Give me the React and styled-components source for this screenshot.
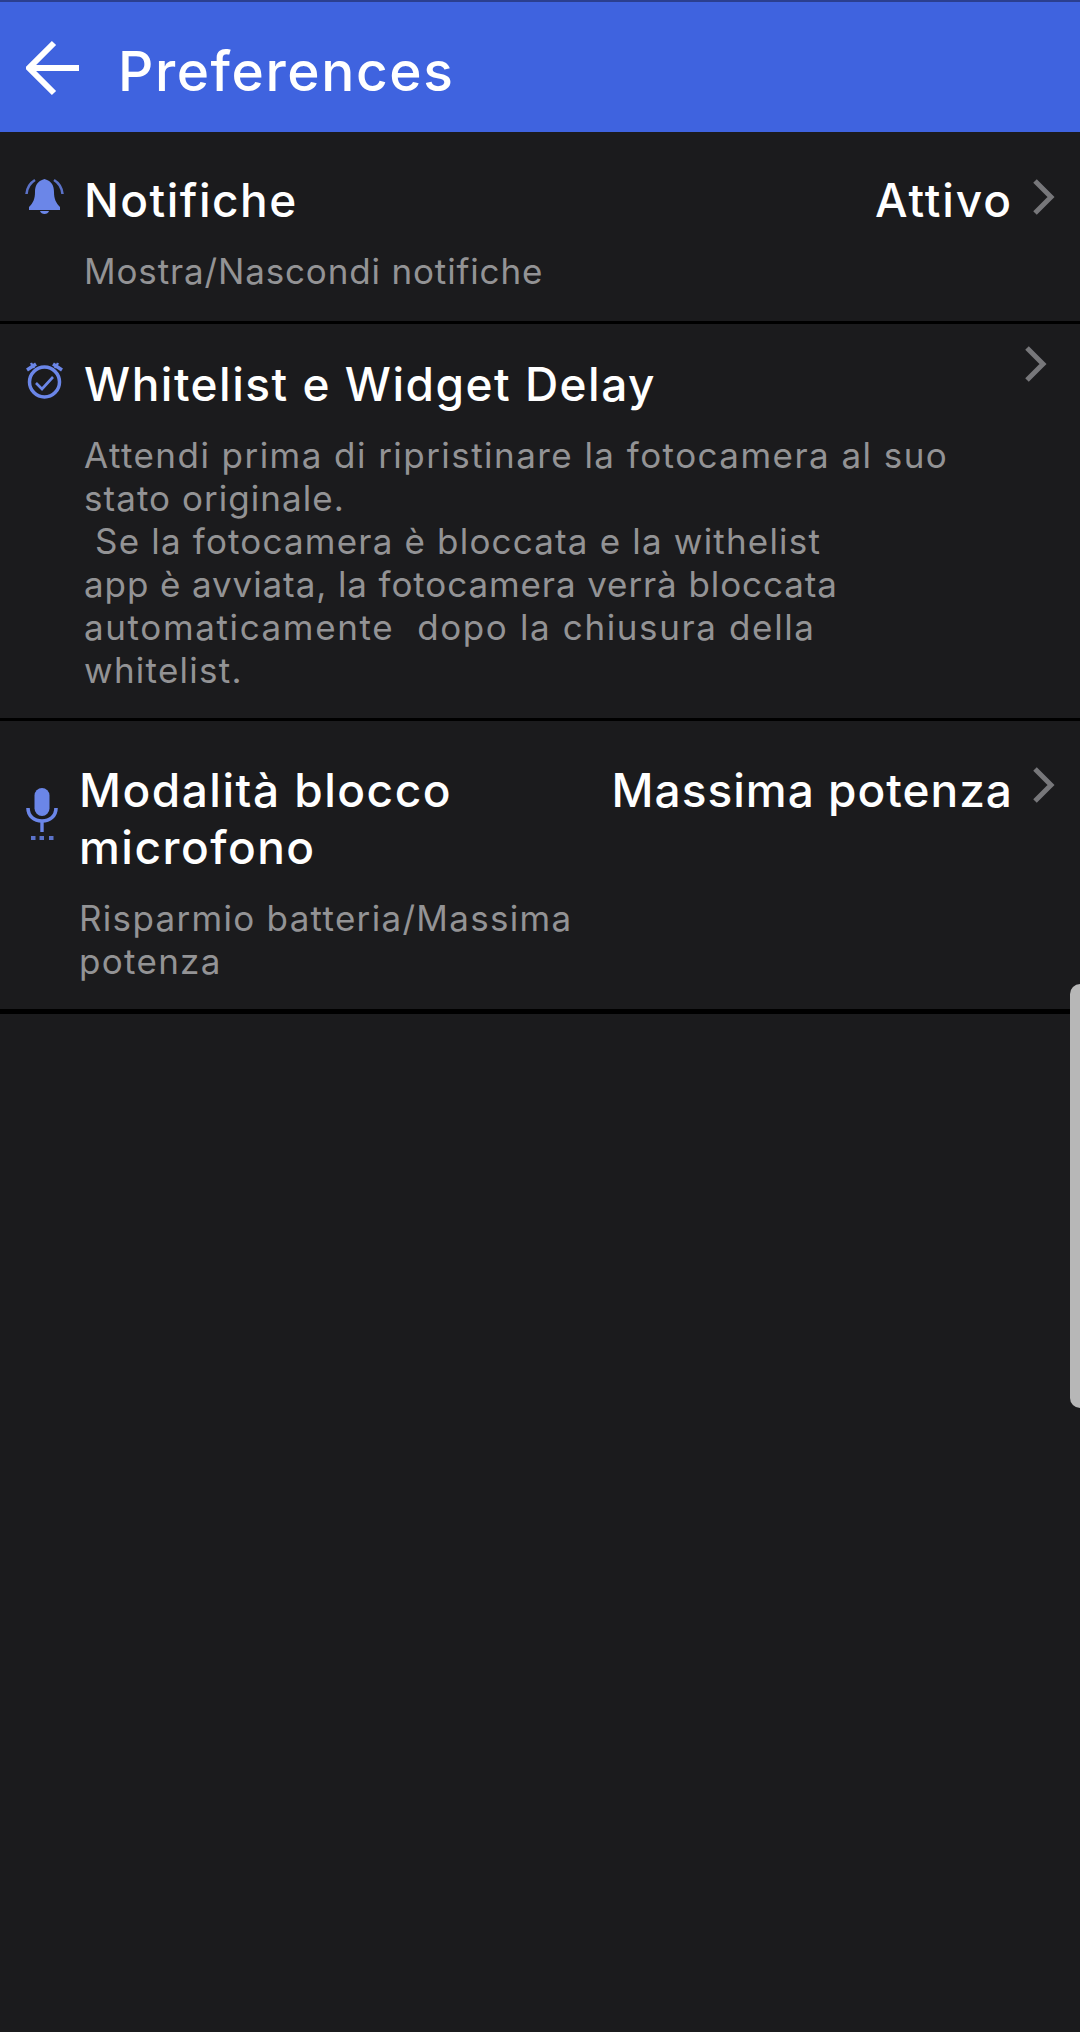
import React from 'react'
import styled, { createGlobalStyle } from 'styled-components'

const GlobalStyle = createGlobalStyle`
  html, body {
    margin: 0;
    padding: 0;
    background: #1b1b1d;
  }
  * {
    box-sizing: border-box;
  }
`

const Page = styled.div`
  position: relative;
  width: 1080px;
  height: 2032px;
  overflow: hidden;
  background: #1b1b1d;
  font-family: Inter, "Noto Sans", sans-serif;
`

const Header = styled.header`
  display: flex;
  align-items: center;
  height: 132px;
  padding: 2px 0 0 26px;
  background: #3f63df;
  border-top: 2px solid #2b3f8f;
`

const BackIcon = styled.svg`
  width: 56px;
  height: 56px;
  margin-right: 36px;
  flex-shrink: 0;
`

const Title = styled.h1`
  margin: 6px 0 0;
  font-size: 55px;
  font-weight: 500;
  letter-spacing: 1.6px;
  color: #fff;
`

const Row = styled.div`
  display: flex;
  align-items: flex-start;
  height: ${props => props.$height}px;
  padding: ${props => props.$top}px 0 0 25px;
  border-bottom: ${props => props.$rule || 3}px solid #000;
`

const IconSlot = styled.div`
  width: ${props => props.$width}px;
  padding-top: ${props => props.$offset}px;
  flex-shrink: 0;
`

const RowIcon = styled.svg`
  display: block;
  width: ${props => props.$width || 40}px;
  height: ${props => props.$height || 40}px;
`

const Body = styled.div`
  width: ${props => props.$width}px;
  flex-shrink: 0;
`

const Label = styled.div`
  font-size: 46px;
  line-height: 57px;
  font-weight: 500;
  letter-spacing: 1.5px;
  color: #fff;
`

const Hint = styled.div`
  margin-top: 21px;
`

const HintLine = styled.div`
  font-size: 35px;
  line-height: 43px;
  font-weight: 400;
  letter-spacing: ${props => props.$spacing}px;
  color: #939395;
  white-space: pre;
`

const Value = styled.div`
  margin-left: auto;
  font-size: 46px;
  line-height: 57px;
  font-weight: 500;
  letter-spacing: ${props => props.$spacing}px;
  color: #fff;
  white-space: nowrap;
`

const Chevron = styled.svg`
  width: 24px;
  height: 38px;
  flex-shrink: 0;
  margin: ${props => props.$top}px ${props => props.$right}px 0 ${props => props.$left}px;
`

const ScrollHandle = styled.div`
  position: absolute;
  right: 0;
  top: 984px;
  width: 10px;
  height: 424px;
  background: #b7b7b7;
  border-radius: 12px 0 0 12px;
`

const BLUE = '#6b86e8'
const BLUE_DIM = '#5b72c8'

const whitelistHint = [
  ['Attendi prima di ripristinare la fotocamera al suo', 1.45],
  ['stato originale.', 1.05],
  [' Se la fotocamera è bloccata e la withelist', 1.18],
  ['app è avviata, la fotocamera verrà bloccata', 0.9],
  ['automaticamente  dopo la chiusura della', 1.62],
  ['whitelist.', 1.25]
]

const Arrow = ({ top, right = 25, left = 18 }) => (
  <Chevron $top={top} $right={right} $left={left} viewBox="0 0 24 38" fill="none">
    <path d="M4 3 L20 19 L4 35" stroke="#77777a" strokeWidth="5" />
  </Chevron>
)

const App = () => (
  <Page>
    <GlobalStyle />
    <Header>
      <BackIcon viewBox="0 0 56 56" fill="none">
        <path d="M28 3 L3 28 L28 53 M3 28 H53" stroke="#fff" strokeWidth="6" />
      </BackIcon>
      <Title>Preferences</Title>
    </Header>

    <Row $height={192} $top={40}>
      <IconSlot $width={59} $offset={5}>
        <RowIcon viewBox="0 0 40 40" fill="none">
          <path d="M19.5 2 C12 4 10 9 10 15 C10 22 8 26 4 30 V33 H35 V30 C31 26 29 22 29 15 C29 9 27 4 19.5 2 Z" fill={BLUE} />
          <path d="M15 34 H24 C23 38 16 38 15 34 Z" fill={BLUE} />
          <path d="M1.5 17 C2 11 5 6 10 3 M37.5 17 C37 11 34 6 29 3" stroke={BLUE_DIM} strokeWidth="2.6" />
        </RowIcon>
      </IconSlot>
      <Body $width={560}>
        <Label>Notifiche</Label>
        <Hint>
          <HintLine $spacing={0.85}>Mostra/Nascondi notifiche</HintLine>
        </Hint>
      </Body>
      <Value $spacing={1.9}>Attivo</Value>
      <Arrow top={6} />
    </Row>

    <Row $height={397} $top={32}>
      <IconSlot $width={59} $offset={6}>
        <RowIcon viewBox="0 0 40 40" fill="none">
          <circle cx="19.5" cy="20" r="15" stroke={BLUE} strokeWidth="3.5" />
          <path d="M11 21 L17 27 L28 15" stroke={BLUE} strokeWidth="2.6" />
          <path d="M2 8 L11 2 M37 8 L28 2" stroke={BLUE} strokeWidth="3.4" />
          <path d="M6 1 L9 6 M33 1 L30 6" stroke={BLUE} strokeWidth="2.4" />
        </RowIcon>
      </IconSlot>
      <Body $width={905}>
        <Label>Whitelist e Widget Delay</Label>
        <Hint>
          {whitelistHint.map(([text, spacing]) => (
            <HintLine key={text} $spacing={spacing}>{text}</HintLine>
          ))}
        </Hint>
      </Body>
      <Arrow top={-11} left={34} right={33} />
    </Row>

    <Row $height={293} $top={41} $rule={5}>
      <IconSlot $width={54} $offset={26}>
        <RowIcon $width={34} $height={54} viewBox="0 0 34 54" fill="none">
          <rect x="9.5" y="0" width="15" height="28" rx="7.5" fill={BLUE} />
          <path d="M3 20 C3 28 9 33 17 33 C25 33 31 28 31 20" stroke={BLUE} strokeWidth="3.6" />
          <path d="M17 33 V44" stroke={BLUE} strokeWidth="3.4" />
          <path d="M6 50 H10.5 M14.5 50 H19 M24 50 H28.5" stroke={BLUE_DIM} strokeWidth="4" />
        </RowIcon>
      </IconSlot>
      <Body $width={510}>
        <Label>
          Modalità blocco
          <br />
          microfono
        </Label>
        <Hint>
          <HintLine $spacing={1.3}>Risparmio batteria/Massima</HintLine>
          <HintLine $spacing={1.3}>potenza</HintLine>
        </Hint>
      </Body>
      <Value $spacing={1}>Massima potenza</Value>
      <Arrow top={4} />
    </Row>

    <ScrollHandle />
  </Page>
)

export default App
